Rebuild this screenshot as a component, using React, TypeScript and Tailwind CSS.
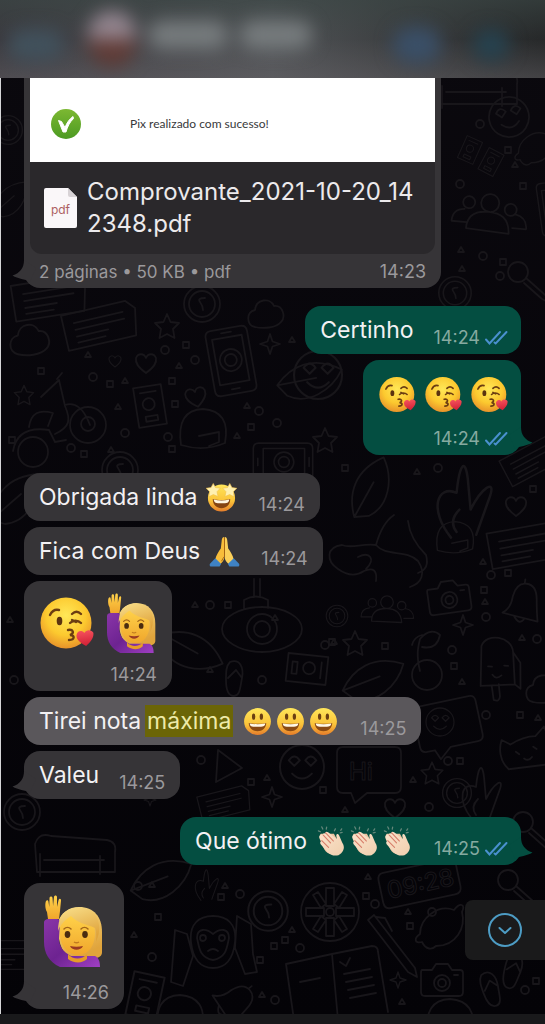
import React from 'react';

/**
 * Shared gradients for the emoji drawings
 */
const EmojiDefs: React.FC = () => (
  <svg className="absolute h-0 w-0" aria-hidden="true">
    <defs>
      <radialGradient id="face" cx="0.5" cy="0.35" r="0.65">
        <stop offset="0" stopColor="#ffe858" />
        <stop offset="0.6" stopColor="#fcc92f" />
        <stop offset="1" stopColor="#e8932a" />
      </radialGradient>
      <linearGradient id="smile" x1="0" y1="0" x2="0" y2="1">
        <stop offset="0" stopColor="#ffe65a" />
        <stop offset="0.6" stopColor="#fbc43a" />
        <stop offset="1" stopColor="#e57d2b" />
      </linearGradient>
      <linearGradient id="skin" x1="0" y1="0" x2="0" y2="1">
        <stop offset="0" stopColor="#ffd24a" />
        <stop offset="1" stopColor="#f0a62c" />
      </linearGradient>
      <linearGradient id="hair" x1="0" y1="0" x2="0.4" y2="1">
        <stop offset="0" stopColor="#f9e08c" />
        <stop offset="1" stopColor="#e0a43c" />
      </linearGradient>
      <linearGradient id="shirt" x1="0" y1="0" x2="1" y2="1">
        <stop offset="0" stopColor="#8a35a8" />
        <stop offset="0.5" stopColor="#6d2391" />
        <stop offset="1" stopColor="#a03fc4" />
      </linearGradient>
      <linearGradient id="heart" x1="0" y1="0" x2="0" y2="1">
        <stop offset="0" stopColor="#f5515c" />
        <stop offset="1" stopColor="#cf1f35" />
      </linearGradient>
      <linearGradient id="clap" x1="0" y1="0" x2="1" y2="1">
        <stop offset="0" stopColor="#fbe3cc" />
        <stop offset="1" stopColor="#f0cfae" />
      </linearGradient>
      <linearGradient id="check" x1="0" y1="0" x2="0" y2="1">
        <stop offset="0" stopColor="#7cb832" />
        <stop offset="1" stopColor="#4c9a22" />
      </linearGradient>
    </defs>
  </svg>
);

interface EmojiProps {
  className: string;
}

const KissEmoji: React.FC<EmojiProps> = ({ className }) => (
  <svg className={className} viewBox="0 0 54 54" role="img" aria-label="😘">
    <circle cx="26" cy="27" r="25.5" fill="url(#face)" />
    <g fill="none" stroke="#6b3d12" strokeWidth="2.4" strokeLinecap="round">
      <path d="M10 19c2-4 5-6 9-5" />
      <path d="M32 18c3-3 6-3 9 0" />
      <path d="M30 27c3-3 8-3 11 0M32 24l4 2" />
      <path d="M28 34c5-1 7 3 2 5 5 0 5 5-1 5" />
    </g>
    <ellipse cx="19.500" cy="25" rx="2.800" ry="4.200" fill="#5b3310" />
    <path d="M45 50c-6-4-9-8-8-12 1-4 6-5 8-1 3-4 8-2 9 1 0 5-4 9-9 12z" fill="url(#heart)" transform="rotate(-8 45 42)" />
  </svg>
);

const SmileEmoji: React.FC<EmojiProps> = ({ className }) => (
  <svg className={className} viewBox="0 0 34 34" role="img" aria-label="😃">
    <circle cx="17" cy="17" r="13.800" fill="url(#smile)" />
    <ellipse cx="13" cy="12" rx="1.700" ry="3.200" fill="#6b3f12" />
    <ellipse cx="21" cy="12" rx="1.700" ry="3.200" fill="#6b3f12" />
    <path d="M8 18.500c5 1.200 13 1.200 18 0 0 5-4 8.500-9 8.500s-9-3.500-9-8.500z" fill="#8a4a14" />
    <path d="M9 19c5 1 11 1 16 0-.3 3-2 3.500-8 3.500S9.300 22 9 19z" fill="#fff8e6" />
  </svg>
);

const StarEyesEmoji: React.FC<EmojiProps> = ({ className }) => (
  <svg className={className} viewBox="0 0 34 34" role="img" aria-label="🤩">
    <circle cx="17" cy="17.500" r="14" fill="url(#smile)" />
    <path d="M8 18.500c5 1.500 13 1.500 18 0 0 6-4 9.500-9 9.500s-9-3.500-9-9.500z" fill="#854312" />
    <path d="M9 19c5 1.500 11 1.500 16 0-.5 3.500-2 4-8 4s-7.500-.5-8-4z" fill="#fff5e0" />
    <g fill="#fff0b0" stroke="#efc04c" strokeWidth="0.600">
      <path d="M8.500 2.500l2.300 4.300 5 .6-3.400 3.600 1 5-4.800-2-4.600 2.200.8-5.200L1.200 7.500l5-.8z" />
      <path d="M25.500 2.500l2.300 4.200 5 .8-3.600 3.500.8 5.200-4.600-2.200-4.800 2 1-5-3.400-3.600 5-.6z" />
    </g>
  </svg>
);

const PrayEmoji: React.FC<EmojiProps> = ({ className }) => (
  <svg className={className} viewBox="0 0 34 34" role="img" aria-label="🙏">
    <path d="M16.700 2c-1.900 0-2.500 2-2.700 5l-.8 7c-2.200 3-4.700 7-5.700 11l5.500 5c1.800-2 3.300-4 3.700-6z" fill="#f8bd3a" />
    <path d="M17.300 2c1.900 0 2.500 2 2.700 5l.8 7c2.200 3 4.700 7 5.700 11l-5.500 5c-1.800-2-3.300-4-3.700-6z" fill="#fbd05a" />
    <path d="M17 3v19c-1.200 2-2.500 3-3 5" fill="none" stroke="#a86613" strokeWidth="1" />
    <path d="M7.500 24l6 6-1.500 2.500H2.500c-.8-1-1-2-.5-3z" fill="#3f82c4" />
    <path d="M26.500 24l-6 6 1.500 2.500h9.500c.8-1 1-2 .5-3z" fill="#3f82c4" />
  </svg>
);

const ClapEmoji: React.FC<EmojiProps> = ({ className }) => (
  <svg className={className} viewBox="0 0 34 34" role="img" aria-label="👏🏻">
    <g stroke="#64877a" strokeWidth="1.300" strokeLinecap="round">
      <path d="M3.500 6l2 1M7 2l1 2.200M12 2.200l-.4 2M21 4l-1 2M27.500 4l-1 1.500M26 8l2-.4" />
    </g>
    <path d="M6 9c-2 2-1.500 5-.5 7l4 9c3 5 8 6 12 4l6-5-8-15z" fill="#eac3a0" />
    <path d="M5 11c-1.500 1 .5 4 2 6-2-.5-2 1.500-1 3l7 8c4 4 10 5 14 1 4-4 3-8 1-11l-3-7c-1-2.500-3.500-2-3 .5l.5 3-9-7c-2-1.500-3.500 0-2.500 1.500C9 7.500 7.500 9 8.500 10.500 7 9.500 5.500 9.800 5 11z" fill="url(#clap)" />
    <path d="M8.500 10.500l7.500 8M11 8l8 8.500M7 16l7 7" fill="none" stroke="#d77d69" strokeWidth="1.100" strokeLinecap="round" />
  </svg>
);

const WomanEmoji: React.FC<EmojiProps> = ({ className }) => (
  <svg className={className} viewBox="0 0 60 72" role="img" aria-label="🙋🏼‍♀️">
    {/* Hair behind the face */}
    <path d="M14 27c3-9 11-15 21-15 15 0 23 10 23 25v20c0 4-3 6-8 6H25c-8-6-12-20-11-36z" fill="url(#hair)" />
    {/* Raised arm and shirt */}
    <path d="M0 28c0-3 2-4 5-4h7c3 0 4 1 4 4l-1 15c-.5 7 4 14 12 18h24c4 2 5 6 5 11H16C5 67 0 58 0 47z" fill="url(#shirt)" />
    <path d="M24 59c5 6 14 6 19 0v5c-5 5-14 4-19 0z" fill="#e69a28" />
    <path d="M4 24L3 17C1 14 1 8 2 6c1-1.500 2.500-1 2.500 1l.8 5L5.500 3c.3-2 2.800-2 3 0l.6 8L10 2c.3-2 2.800-2 3 0v10l1.600-7c.6-2 2.800-1.200 2.400.8L16 16l-1 8z" fill="url(#skin)" />
    {/* Face */}
    <path d="M16 33c1-9 8-13 17-13 11 0 18 6 18 18 0 13-7 22-17 22S16 51 16 39z" fill="url(#skin)" />
    <path d="M14 36c2-6 6-10 13-15 6 7 15 8 24 12 2 5 1 10 1 14 5-10 5-24-5-31-9-6-23-4-29 4-3 4-4 10-4 16z" fill="url(#hair)" />
    <path d="M20 34c2-2 5-2 7 0M37 34c2-2 5-2 7 0" fill="none" stroke="#a1651a" strokeWidth="1.500" strokeLinecap="round" />
    <ellipse cx="23.500" cy="39.500" rx="2.800" ry="3.400" fill="#4a2c10" />
    <ellipse cx="41" cy="39.500" rx="2.800" ry="3.400" fill="#4a2c10" />
    <path d="M30 47c1.500 1 3.500 1 5 0" fill="none" stroke="#c27c20" strokeWidth="1.500" />
    <path d="M26 51c4 1 9 1 13 0-2 5-11 5-13 0z" fill="#9b3b22" />
  </svg>
);

/**
 * Wallpaper doodles
 */
const STAR = 'M0-12l3.500 8 8.500 1-6 6 1.500 9L0 8l-7.500 4L-6 3l-6-6 8.500-1z';
const SPARKLE = 'M0-10l2.500 7.500L10 0 2.500 2.500 0 10-2.500 2.500-10 0l7.500-2.500z';
const HEART = 'M0 10C-8 4-11 0-10-5c2-5 8-5 10 0 2-5 8-5 10 0 1 5-2 9-10 15z';
const CLOUD = 'M-12 12c-9-2-9-15 0-17 1-11 15-13 19-4 9-1 12 11 7 16-5 6-18 7-26 5z';
const CAMERA =
  'M-20-10h10l4-6h12l4 6h8q3 0 3 3v19q0 4-4 4h-34q-4 0-4-4v-19q0-3 1-3zM8 3a8 8 0 1 1-16 0a8 8 0 1 1 16 0M4 3a4 4 0 1 1-8 0a4 4 0 1 1 8 0M12-5h4';
const PEOPLE =
  'M-15-13a6 6 0 1 1-12 0a6 6 0 1 1 12 0M9-14a9 9 0 1 1-18 0a9 9 0 1 1 18 0M27-9a6 6 0 1 1-12 0a6 6 0 1 1 12 0M-22 13c0-14 9-18 21-18s21 4 22 20zM-22 7h-15q0-12 12-13M24 9h14q0-12-12-14';
const NOTE = 'M-37-18h66l8 9-5 27h-69zM-26-8h50M-26-1h50M-26 6h32M-26 12h28';
const PHONE =
  'M-15-33h30q6 0 6 6v54q0 6-6 6h-30q-6 0-6-6v-54q0-6 6-6zM-15-24h30v46h-30zM-5-29h10M-4 28h8M11-1a11 11 0 1 1-22 0a11 11 0 1 1 22 0M6-1a6 6 0 1 1-12 0a6 6 0 1 1 12 0';
const FACE = 'M20 0a20 20 0 1 1-40 0a20 20 0 1 1 40 0M-12-6q5-7 10 0l-5 5zM3-6q5-7 10 0l-5 5zM-9 6q9 9 18 0';
const COIN = 'M18 0a18 18 0 1 1-36 0a18 18 0 1 1 36 0M13 0a13 13 0 1 1-26 0a13 13 0 1 1 26 0M3-6q-8 0-5 4t3 8';
const CARD = 'M-14-20h28v40h-28zM-8-14h16M-6 10h12v5H-6zM5-2a6 6 0 1 1-12 0a6 6 0 1 1 12 0';
const BIKE =
  'M46-7a18 18 0 1 1-36 0a18 18 0 1 1 36 0M-12 20a15 15 0 1 1-30 0a15 15 0 1 1 30 0M35-8a7 7 0 1 1-14 0a7 7 0 1 1 14 0M-47 19c3-18 16-24 36-21l6 12 11-2M-31-5c2-14 10-18 24-14l-5 13M-5 2C10-5 11-12 5-26l-6-26-18 17M5-27c10-3 18 2 25 20M-3-53l5-6';
const DOME = 'M-22 13q-5-35 22-36 28 2 22 34-21 9-44 2zM-4 4l20-4v10l-10 4';
const REEL =
  'M29 0a29 29 0 1 1-58 0a29 29 0 1 1 58 0M4 0a4 4 0 1 1-8 0a4 4 0 1 1 8 0M-4-24h8v18h-8zM-4 6h8v18h-8zM-24-4h18v8h-18zM6-4h18v8H6zM-17-17l5-3 8 12-5 4zM17 17l-5 3-8-12 5-4zM17-17l-5-3-8 12 5 4zM-17 17l5 3 8-12-5-4z';
const MONKEY =
  'M-22 2c-2-18 8-26 22-26s24 8 22 26-10 26-22 26S-20 20-22 2zM-16-2c0-10 9-10 16-4 7-6 16-6 16 4-2 8-2 20-16 22C-14 18-14 6-16-2zM-7-2a3 3 0 1 1-6 0a3 3 0 1 1 6 0M12-2a3 3 0 1 1-6 0a3 3 0 1 1 6 0M-5 11q5-4 10 0M-38-10l12 4 6 22-10 30-12-4zM24-24l14 8 2 30 4 18-12 2-10-26z';
const BOOK = 'M-50-16L-4-26l6 66M-50-16l8 56M-4-26l40-8q6 0 6 6l10 60M4-18l6 4 4-8M8-6l26-5M10 2l26-5M12 10l26-5M14 18l26-5M-36 2l20-4';
const BELL = 'M-16 12q8-6 8-18 2-14 12-14t12 14 4 22zM-4 14q6 8 10 2M2-20v-4';
const POPSICLE = 'M-16-20c4-14 30-12 32 4l4 32-34 4zM-3 19l3 14q6 2 6-4l-2-12M-8 0h4M8-2h4M-3 8q4 5 9 0M16-16l8 10 2 26-6-4';
const LEMON = 'M-25 12c-8 2-8-4-2-8 0-16 18-30 34-24 6-8 12-6 8 2 4 16-6 34-26 34-4 4-10 4-14-4z';
const MAGNIFIER = 'M-2-4a10 10 0 1 1-20 0a10 10 0 1 1 20 0M-4 2l18 16q5 4 2 7l-4-2-18-16';
const SAUCER =
  'M40 0c0 12-18 23-40 23S-40 12-40 0s18-22 40-22S40-12 40 0zM15 0a15 15 0 1 1-30 0a15 15 0 1 1 30 0M8 0a8 8 0 1 1-16 0a8 8 0 1 1 16 0M-18-20v-9q12-7 24 0v8M-8-32v-18M-2-32v-18';
const CHERRY = 'M16 8a15 15 0 1 1-30 0a15 15 0 1 1 30 0M-6 4c-4-16-2-24 0-32 8-10 16-8 20-4-2 10-8 14-18 12M-4-32q-8 2-10 10';
const CAT = 'M-20 14c-8-10-6-22-2-30l8 6q14-6 26-4l10-8q6 20-2 38zM-10-2l3 3M8-4l3 3M-3 6q4 4 8 0';
const CACTUS = 'M-10 34C-26 14-20-4-6 2c2-20 6-26 8-10l2 22C12-2 22-8 18 4L8 32M-4 14q-8 8-2 16';
const FLIPFLOP = 'M-6-18c10-4 14 6 12 16s-2 18-8 18-8-8-8-16 0-14 4-18zM-8-2l8-8 6 8';
const CLOCK = 'M-36-18h66q7 0 7 7v22q0 7-7 7h-66q-6 0-6-7v-22q0-7 6-7z';
const BUBBLE = 'M-26-24h52q6 0 6 6v34q0 6-6 6h-28l-12 10-4-10h-8q-6 0-6-6v-34q0-6 6-6z';
const DINO =
  'M-50 24c-12-8-12-22 4-24 10 4 20-2 34 0q6-22 18-30M-12 0c10 12 30 4 42 16 8 12 4 22-8 26M20-24q2 18 18 34 4 14-8 18M-30 12c12-6 18 2 8 12M-50 24q14 10 26 2 14-6 12 10';
const LEAF = 'M-24 20C-22-4-8-24 24-26c2 24-12 48-34 50zM-24 20L6-6';
const SOFA = 'M-45-6q4-12 16-8l56 4q10 2 8 12v20h-78zM-36 10h60M-40 4v22M20 6v18';

interface Doodle {
  d: string;
  x: number;
  y: number;
  rotate?: number;
  scale?: number;
}

const DOODLES: Doodle[] = [
  { d: SOFA, x: 482, y: 82 },
  { d: FACE, x: 509, y: 117, rotate: -12 },
  { d: CARD, x: 470, y: 150, rotate: 24, scale: 0.6 },
  { d: CARD, x: 491, y: 162, rotate: 28, scale: 0.6 },
  { d: LEMON, x: 540, y: 150, scale: 0.8 },
  { d: PEOPLE, x: 489, y: 217, rotate: 5 },
  { d: PHONE, x: 556, y: 208, rotate: -8, scale: 0.8 },
  { d: MAGNIFIER, x: 530, y: 276 },
  { d: COIN, x: 455, y: 293, scale: 0.9 },
  { d: COIN, x: 8, y: 130, scale: 0.8 },
  { d: LEAF, x: 10, y: 200, scale: 0.7 },
  { d: NOTE, x: 50, y: 298, rotate: -9 },
  { d: NOTE, x: 101, y: 325, rotate: -13 },
  { d: CLOUD, x: 31, y: 341, scale: 1.1 },
  { d: STAR, x: 167, y: 326 },
  { d: COIN, x: 202, y: 304 },
  { d: CLOUD, x: 267, y: 315 },
  { d: PHONE, x: 231, y: 361, rotate: -10 },
  { d: SPARKLE, x: 270, y: 344 },
  { d: LEAF, x: 308, y: 380, rotate: 30 },
  { d: HEART, x: 146, y: 363 },
  { d: HEART, x: 115, y: 361, scale: 0.6 },
  { d: HEART, x: 196, y: 397, rotate: -12 },
  { d: CARD, x: 150, y: 406, rotate: -9 },
  { d: BIKE, x: 60, y: 432 },
  { d: STAR, x: 24, y: 395, scale: 0.8 },
  { d: DOME, x: 203, y: 432 },
  { d: PHONE, x: 283, y: 462, rotate: 90, scale: 0.9 },
  { d: COIN, x: 120, y: 470 },
  { d: STAR, x: 325, y: 440 },
  { d: FACE, x: 318, y: 375, scale: 1.2 },
  { d: LEAF, x: 15, y: 500 },
  { d: DINO, x: 388, y: 545 },
  { d: LEAF, x: 370, y: 490, rotate: -20 },
  { d: CACTUS, x: 465, y: 490, scale: 1.4 },
  { d: DOME, x: 455, y: 540, scale: 0.8 },
  { d: NOTE, x: 532, y: 460, rotate: -28, scale: 0.8 },
  { d: HEART, x: 516, y: 506 },
  { d: NOTE, x: 526, y: 545, rotate: -10 },
  { d: CAMERA, x: 449, y: 597, rotate: -8 },
  { d: PEOPLE, x: 387, y: 612, scale: 0.7 },
  { d: BELL, x: 520, y: 603, rotate: 8 },
  { d: SPARKLE, x: 463, y: 625 },
  { d: STAR, x: 355, y: 643 },
  { d: COIN, x: 337, y: 616, scale: 0.6 },
  { d: CHERRY, x: 426, y: 667 },
  { d: POPSICLE, x: 496, y: 667, rotate: 4 },
  { d: LEAF, x: 372, y: 680, rotate: 20 },
  { d: CLOUD, x: 545, y: 690 },
  { d: SAUCER, x: 262, y: 629 },
  { d: CARD, x: 307, y: 669, rotate: 96 },
  { d: LEAF, x: 190, y: 650, rotate: 70 },
  { d: FLIPFLOP, x: 236, y: 680 },
  { d: BUBBLE, x: 448, y: 725, rotate: -12 },
  { d: FACE, x: 440, y: 722, scale: 0.7 },
  { d: CAT, x: 526, y: 752, rotate: -10 },
  { d: CACTUS, x: 482, y: 785 },
  { d: COIN, x: 457, y: 793, scale: 0.8 },
  { d: STAR, x: 432, y: 773, scale: 0.9 },
  { d: BUBBLE, x: 369, y: 771 },
  { d: FACE, x: 302, y: 767, scale: 1.1 },
  { d: 'M-10-16L14 2-12 16z', x: 228, y: 766 },
  { d: SPARKLE, x: 272, y: 797 },
  { d: NOTE, x: 225, y: 803, rotate: -14, scale: 0.7 },
  { d: HEART, x: 395, y: 808 },
  { d: COIN, x: 22, y: 812 },
  { d: SOFA, x: 80, y: 850 },
  { d: LEAF, x: 160, y: 880, rotate: 20 },
  { d: MAGNIFIER, x: 535, y: 826 },
  { d: SPARKLE, x: 150, y: 800, scale: 0.6 },
  { d: CLOCK, x: 422, y: 883, rotate: -12 },
  { d: REEL, x: 330, y: 912 },
  { d: COIN, x: 268, y: 911, scale: 1.1 },
  { d: CACTUS, x: 207, y: 880, scale: 0.6 },
  { d: 'M-23-26l6-5L24 22l2 9-9-5zM-15-29l9 1 7 13', x: 391, y: 946 },
  { d: LEMON, x: 447, y: 930 },
  { d: MAGNIFIER, x: 520, y: 884 },
  { d: BOOK, x: 336, y: 980 },
  { d: CAMERA, x: 442, y: 980 },
  { d: SPARKLE, x: 398, y: 980, scale: 0.8 },
  { d: FLIPFLOP, x: 493, y: 990, rotate: -20 },
  { d: FLIPFLOP, x: 514, y: 973, rotate: 12 },
  { d: MONKEY, x: 213, y: 940 },
  { d: CARD, x: 145, y: 996, rotate: 12, scale: 1.1 },
  { d: BELL, x: 232, y: 1000, rotate: 50 },
  { d: NOTE, x: 10, y: 955, scale: 0.8 },
  { d: DOME, x: 450, y: 1022 },
  { d: DOME, x: 180, y: 1018 },
];

// Small dots, squares and triangles scattered between the big drawings
const CRUMBS: [number, number][] = [
  [480, 124], [508, 150], [515, 165], [460, 184], [523, 186], [461, 250], [483, 256], [503, 262], [462, 269], [500, 276],
  [41, 371], [88, 355], [93, 377], [110, 384], [125, 381], [165, 350], [186, 345], [179, 366], [195, 360], [172, 381],
  [118, 407], [125, 433], [175, 404], [247, 406], [259, 411], [251, 427], [237, 436], [71, 448], [84, 454], [111, 450],
  [168, 437], [172, 449], [292, 340], [277, 423], [345, 468], [417, 472], [438, 468], [533, 489], [483, 562], [491, 575],
  [484, 590], [485, 602], [486, 617], [508, 573], [522, 638], [537, 639], [385, 646], [334, 642], [452, 650], [454, 666],
  [462, 682], [486, 715], [520, 715], [538, 718], [448, 761], [460, 761], [413, 780], [429, 807], [251, 782], [267, 778],
  [201, 760], [323, 790], [195, 605], [210, 605], [228, 605], [275, 618], [325, 645], [332, 642], [210, 670], [262, 680],
  [221, 897], [225, 886], [240, 894], [366, 896], [368, 877], [375, 904], [410, 926], [408, 912], [432, 912], [285, 940],
  [292, 930], [300, 948], [274, 946], [402, 1002], [275, 1000], [158, 917], [134, 935], [152, 957], [260, 960], [262, 995],
  [525, 990], [536, 981], [152, 885], [138, 886], [195, 830], [345, 810], [145, 775], [12, 440], [10, 620], [14, 680],
];

const Wallpaper: React.FC = () => (
  <svg
    className="pointer-events-none absolute inset-0 h-full w-full"
    viewBox="0 0 545 1024"
    preserveAspectRatio="xMidYMin slice"
    fill="none"
    stroke="#18161a"
    strokeWidth="1.800"
    strokeLinejoin="round"
    strokeLinecap="round"
    aria-hidden="true"
  >
    {DOODLES.map((item, i) => (
      <path
        key={i}
        d={item.d}
        transform={`translate(${item.x} ${item.y}) rotate(${item.rotate ?? 0}) scale(${item.scale ?? 1})`}
      />
    ))}
    {CRUMBS.map(([x, y], i) => {
      if (i % 3 === 0) return <circle key={i} cx={x} cy={y} r="4" />;
      if (i % 3 === 1) return <path key={i} d={`M${x - 3} ${y - 3}h6v6h-6z`} />;
      return <path key={i} d={`M${x} ${y - 3}l3 5h-6z`} />;
    })}
    <g fontFamily="Inter, sans-serif" fontWeight="500" strokeWidth="1">
      <text x="349" y="780" fontSize="24">Hi</text>
      <text x="389" y="899" fontSize="24" transform="rotate(-12 389 899)">09:28</text>
    </g>
  </svg>
);

/**
 * Message pieces
 */
const Ticks: React.FC = () => (
  <svg
    className="h-4 w-6 text-[#4a90cf]"
    viewBox="0 0 24 16"
    fill="none"
    stroke="currentColor"
    strokeWidth="2"
    strokeLinecap="round"
    role="img"
    aria-label="Lida"
  >
    <path d="M2 9.500l3.500 4L16 2M10.500 12.500l1.200 1L22.500 2" />
  </svg>
);

interface BubbleProps {
  side: 'in' | 'out';
  time: string;
  tail?: boolean;
  stacked?: boolean;
  marked?: boolean;
  children: React.ReactNode;
}

const Tail: React.FC<{ side: 'in' | 'out' }> = ({ side }) => (
  <svg
    className={
      side === 'in'
        ? 'absolute bottom-1 -left-3 h-6 w-6 text-[#363437]'
        : 'absolute bottom-1 -right-3 h-6 w-6 -scale-x-100 text-[#044e41]'
    }
    viewBox="0 0 24 24"
    fill="currentColor"
    aria-hidden="true"
  >
    <path d="M12 0c0 8-4 13-11.500 15.500C6 19 13 19 18 21.500L24 8z" />
  </svg>
);

const Bubble: React.FC<BubbleProps> = ({ side, time, tail, stacked, marked, children }) => {
  const color = side === 'out' ? 'bg-[#044e41]' : marked ? 'bg-[#5a575b]' : 'bg-[#363437]';
  const place = side === 'out' ? 'self-end pr-[13px]' : 'self-start pr-[15px]';
  const flow = stacked ? 'flex-col pl-4 pt-3' : 'min-h-12 items-center gap-5 pl-[15px]';

  return (
    <div className={`relative flex rounded-2xl ${color} ${place} ${flow}`}>
      {tail && <Tail side={side} />}
      <div className="relative flex items-center text-[23px] leading-8 text-[#f3f1f3]">{children}</div>
      <div
        className={`relative flex items-center gap-1 self-end pb-[6px] text-[18px] leading-5 ${
          side === 'out' ? 'text-[#86aaa0]' : 'text-[#9b999c]'
        }`}
      >
        <time>{time}</time>
        {side === 'out' && <Ticks />}
      </div>
    </div>
  );
};

const App: React.FC = () => {
  return (
    <div className="relative flex min-h-screen flex-col overflow-hidden bg-linear-to-b from-[#0b090e] to-[#040307] font-['Inter',sans-serif]">
      <EmojiDefs />
      <Wallpaper />

      {/* Contact bar, hidden behind a heavy blur */}
      <header className="relative flex h-[78px] items-center overflow-hidden bg-linear-to-r from-[#3b3a3f] via-[#505356] to-[#262829]">
        <div className="absolute inset-0 bg-linear-to-b from-[#3a4644]/60 via-transparent to-[#6d686d]/40" />
        <div className="relative flex w-full items-center px-2 blur-[9px]">
          <button className="mt-3 h-8 w-14 rounded-full bg-[#41515c]" aria-label="Voltar" />
          <div className="ml-6 flex h-14 w-12 flex-col overflow-hidden rounded-full">
            <div className="flex-1 bg-[#948690]" />
            <div className="flex-1 bg-[#603b36]" />
          </div>
          <div className="mb-2 ml-3 h-7 w-20 rounded-full bg-[#777c7e]" />
          <div className="mb-2 ml-3 h-7 w-18 rounded-full bg-[#777c7e]" />
          <button className="mt-3 ml-auto h-9 w-12 rounded-full bg-[#3a4f67]" aria-label="Chamada de vídeo" />
          <button className="mt-3 mr-7 ml-8 h-8 w-9 rounded-full bg-[#26424f]" aria-label="Chamada de voz" />
        </div>
      </header>

      <main className="relative flex flex-1 flex-col gap-[18px] border-l border-[#d6d6d8] pr-6 pb-[5px] pl-[23px]">
        {/* Document */}
        <div className="relative w-[417px] max-w-full self-start rounded-b-2xl bg-[#363437] px-[6px]">
          <Tail side="in" />
          <div className="relative overflow-hidden rounded-b-xl bg-[#2a282b]">
            <div className="flex h-[84px] items-center bg-white pt-2 pl-5">
              <svg className="h-8 w-8" viewBox="0 0 32 32" role="img" aria-label="✅">
                <circle cx="16" cy="16" r="15" fill="url(#check)" />
                <path d="M8.500 12.500l3 1 3.500 6c2-5 4-8 8-11l.5 2c-4 4-6 8-7.500 13.500h-3z" fill="#fff" stroke="#fff" strokeLinejoin="round" />
              </svg>
              <p className="ml-12 font-['Lato',sans-serif] text-[12px] leading-4 text-[#38383a]">Pix realizado com sucesso!</p>
            </div>
            <div className="flex h-[92px] items-center gap-[10px] pl-[14px]">
              <div className="relative h-10 w-[33px]">
                <svg className="absolute inset-0 h-10 w-[33px]" viewBox="0 0 33 40" aria-hidden="true">
                  <path d="M2 0h22l9 9v29q0 2-2 2H2q-2 0-2-2V2q0-2 2-2z" fill="#faf7f9" />
                  <path d="M24 0l9 9h-7q-2 0-2-2z" fill="#d8d3d6" />
                </svg>
                <span className="relative block pt-[14px] text-center text-[12px] leading-4 text-[#ad5f62]">pdf</span>
              </div>
              <p className="flex-1 text-[24px] leading-8 text-[#eceaec]">
                Comprovante_2021-10-20_14
                <br />
                2348.pdf
              </p>
            </div>
          </div>
          <div className="relative flex items-center justify-between px-[9px] pt-2 pb-[6px] text-[18px] leading-5 text-[#9b999c]">
            <span className="text-[17px]">2 páginas • 50 KB • pdf</span>
            <time>14:23</time>
          </div>
        </div>

        <div className="flex flex-col gap-[6px]">
          <Bubble side="out" time="14:24">Certinho</Bubble>
          <Bubble side="out" time="14:24" tail stacked>
            <div className="flex gap-[9px] pt-1 pb-4">
              <KissEmoji className="h-[37px] w-[37px]" />
              <KissEmoji className="h-[37px] w-[37px]" />
              <KissEmoji className="h-[37px] w-[37px]" />
            </div>
          </Bubble>
        </div>

        <div className="flex flex-col gap-[6px]">
          <Bubble side="in" time="14:24">
            Obrigada linda
            <StarEyesEmoji className="ml-2 h-[33px] w-[33px]" />
          </Bubble>
          <Bubble side="in" time="14:24">
            Fica com Deus
            <PrayEmoji className="ml-2 h-[33px] w-[33px]" />
          </Bubble>
          <Bubble side="in" time="14:24" stacked>
            <div className="flex items-center gap-[13px] pb-3">
              <KissEmoji className="h-[54px] w-[54px]" />
              <WomanEmoji className="h-[60px] w-[50px]" />
            </div>
          </Bubble>
          <Bubble side="in" time="14:25" marked>
            <span className="mr-1">Tirei nota</span>
            <mark className="bg-[#6b6507] px-[2px] text-[#eeeaa8]">máxima</mark>
            <SmileEmoji className="ml-2 h-[33px] w-[33px]" />
            <SmileEmoji className="h-[33px] w-[33px]" />
            <SmileEmoji className="h-[33px] w-[33px]" />
          </Bubble>
          <Bubble side="in" time="14:25" tail>Valeu</Bubble>
        </div>

        <Bubble side="out" time="14:25" tail>
          Que ótimo
          <ClapEmoji className="ml-2 h-[33px] w-[33px]" />
          <ClapEmoji className="h-[33px] w-[33px]" />
          <ClapEmoji className="h-[33px] w-[33px]" />
        </Bubble>

        <Bubble side="in" time="14:26" tail stacked>
          <div className="pr-[5px] pb-4 pl-1">
            <WomanEmoji className="h-[72px] w-[60px]" />
          </div>
        </Bubble>
      </main>

      {/* Scroll to the latest message */}
      <button
        className="absolute right-0 bottom-16 flex h-[60px] w-20 items-center justify-center rounded-l-lg bg-[#1a1a1b] text-[#4d9cc4]"
        aria-label="Ir para o fim"
      >
        <svg className="h-9 w-9" viewBox="0 0 36 36" fill="none" stroke="currentColor" strokeWidth="2" strokeLinecap="round" strokeLinejoin="round">
          <circle cx="18" cy="18" r="16" />
          <path d="M12.500 16l5.500 5 5.500-5" />
        </svg>
      </button>

      <footer className="relative h-[10px] bg-[#19191b]" />
    </div>
  );
};

export default App;
